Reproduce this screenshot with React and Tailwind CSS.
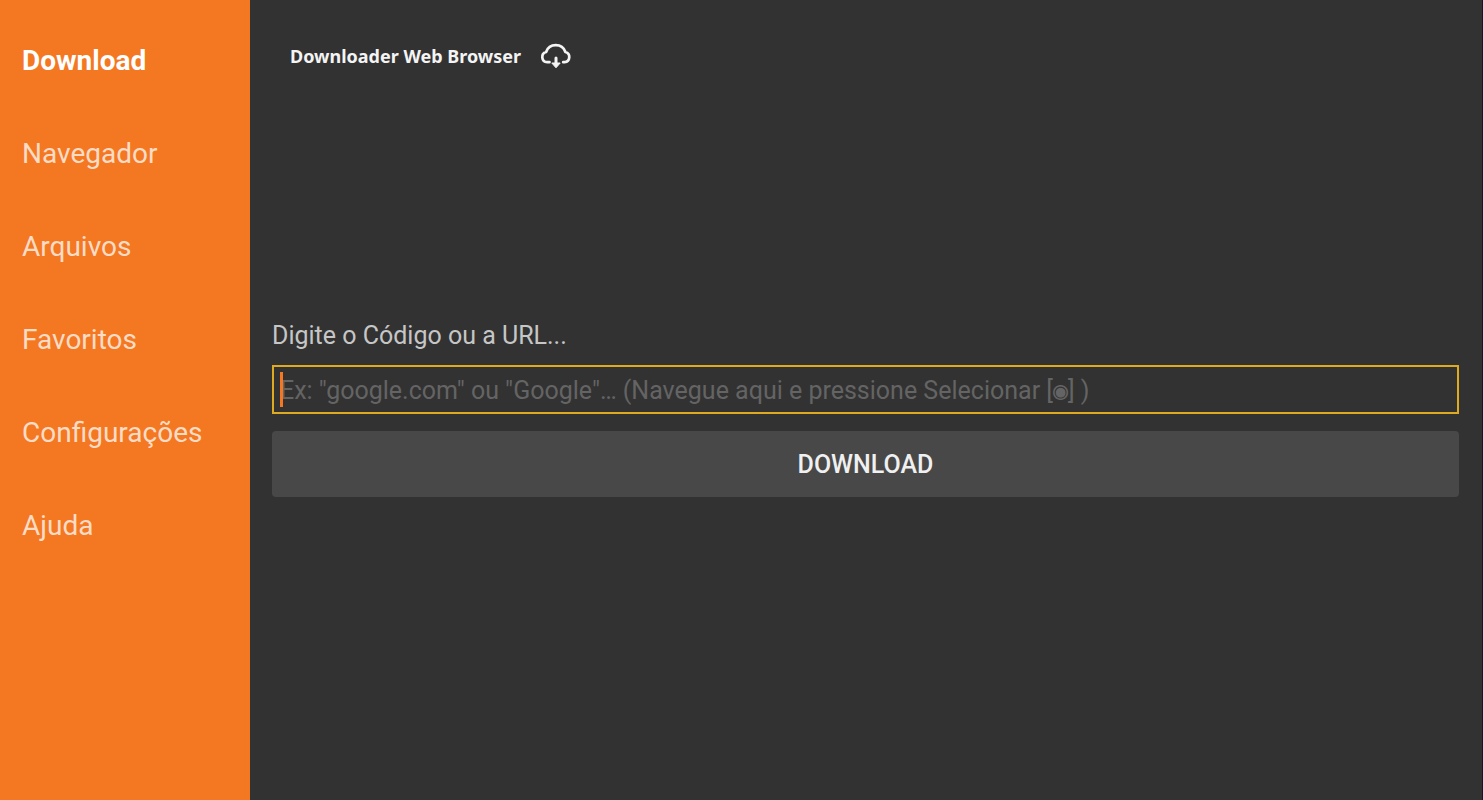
import React from "react";

const items = ["Download", "Navegador", "Arquivos", "Favoritos", "Configurações", "Ajuda"];

function CloudDownload() {
  return (
    <svg width="32" height="28" viewBox="0 0 32 28" fill="none" aria-hidden="true" className="shrink-0">
      <path
        d="M9.5 20.2H7.2A5.2 5.2 0 0 1 6.1 10A10.2 10.2 0 0 1 25.4 10A5.2 5.2 0 0 1 24.6 20.2H23.2"
        stroke="#f4f4f4"
        strokeWidth="2.7"
        strokeLinecap="round"
        strokeLinejoin="round"
      />
      <path d="M16 16V22" stroke="#f4f4f4" strokeWidth="3" strokeLinecap="round" />
      <path d="M11.8 21H20.2L16 25.8Z" fill="#f4f4f4" stroke="#f4f4f4" strokeLinejoin="round" />
    </svg>
  );
}

export default function App() {
  return (
    <div className="flex min-h-screen bg-[#323232] font-[Roboto,sans-serif]">
      <nav className="w-[250px] shrink-0 bg-[#f47721] pt-[14px]">
        <ul>
          {items.map((item, i) => (
            <li key={item}>
              <a
                href="#"
                aria-current={i === 0 ? "page" : undefined}
                className={
                  i === 0
                    ? "flex h-[93px] items-center pl-[22px] text-[28px] font-bold text-white"
                    : "flex h-[93px] items-center pl-[22px] text-[28px] text-[#fddcc6]"
                }
              >
                {item}
              </a>
            </li>
          ))}
        </ul>
      </nav>
      <main className="min-w-0 flex-1 border-r border-[#14142c] pl-[22px] pr-[23px]">
        <header className="flex items-center gap-[19px] pl-[18px] pt-[42px]">
          <h1 className="font-['Noto_Sans',sans-serif] text-[18px] font-bold leading-[28px] text-[#f4f4f4]">
            Downloader Web Browser
          </h1>
          <CloudDownload />
        </header>
        <form className="pt-[248px]" onSubmit={(e) => e.preventDefault()}>
          <label htmlFor="url" className="block text-[25px] leading-[36px] text-[#c6c6c6]">
            Digite o Código ou a URL...
          </label>
          <div className="relative mt-[11px]">
            <input
              id="url"
              type="text"
              placeholder={'Ex: "google.com" ou "Google"… (Navegue aqui e pressione Selecionar [◉] )'}
              className="block h-[49px] w-full border-2 border-[#deaa22] bg-transparent px-1.5 pt-0.5 font-[Roboto,'DejaVu_Sans_Mono',sans-serif] text-[25px] text-[#c6c6c6] caret-transparent outline-none placeholder:text-[#646464]"
            />
            <span aria-hidden="true" className="absolute inset-y-[7px] left-2 w-[3px] bg-[#f47721]" />
          </div>
          <button
            type="submit"
            className="mt-[17px] h-[66px] w-full rounded bg-[#484848] pt-0.5 text-[25px] font-medium text-[#f0f0f0]"
          >
            DOWNLOAD
          </button>
        </form>
      </main>
    </div>
  );
}
